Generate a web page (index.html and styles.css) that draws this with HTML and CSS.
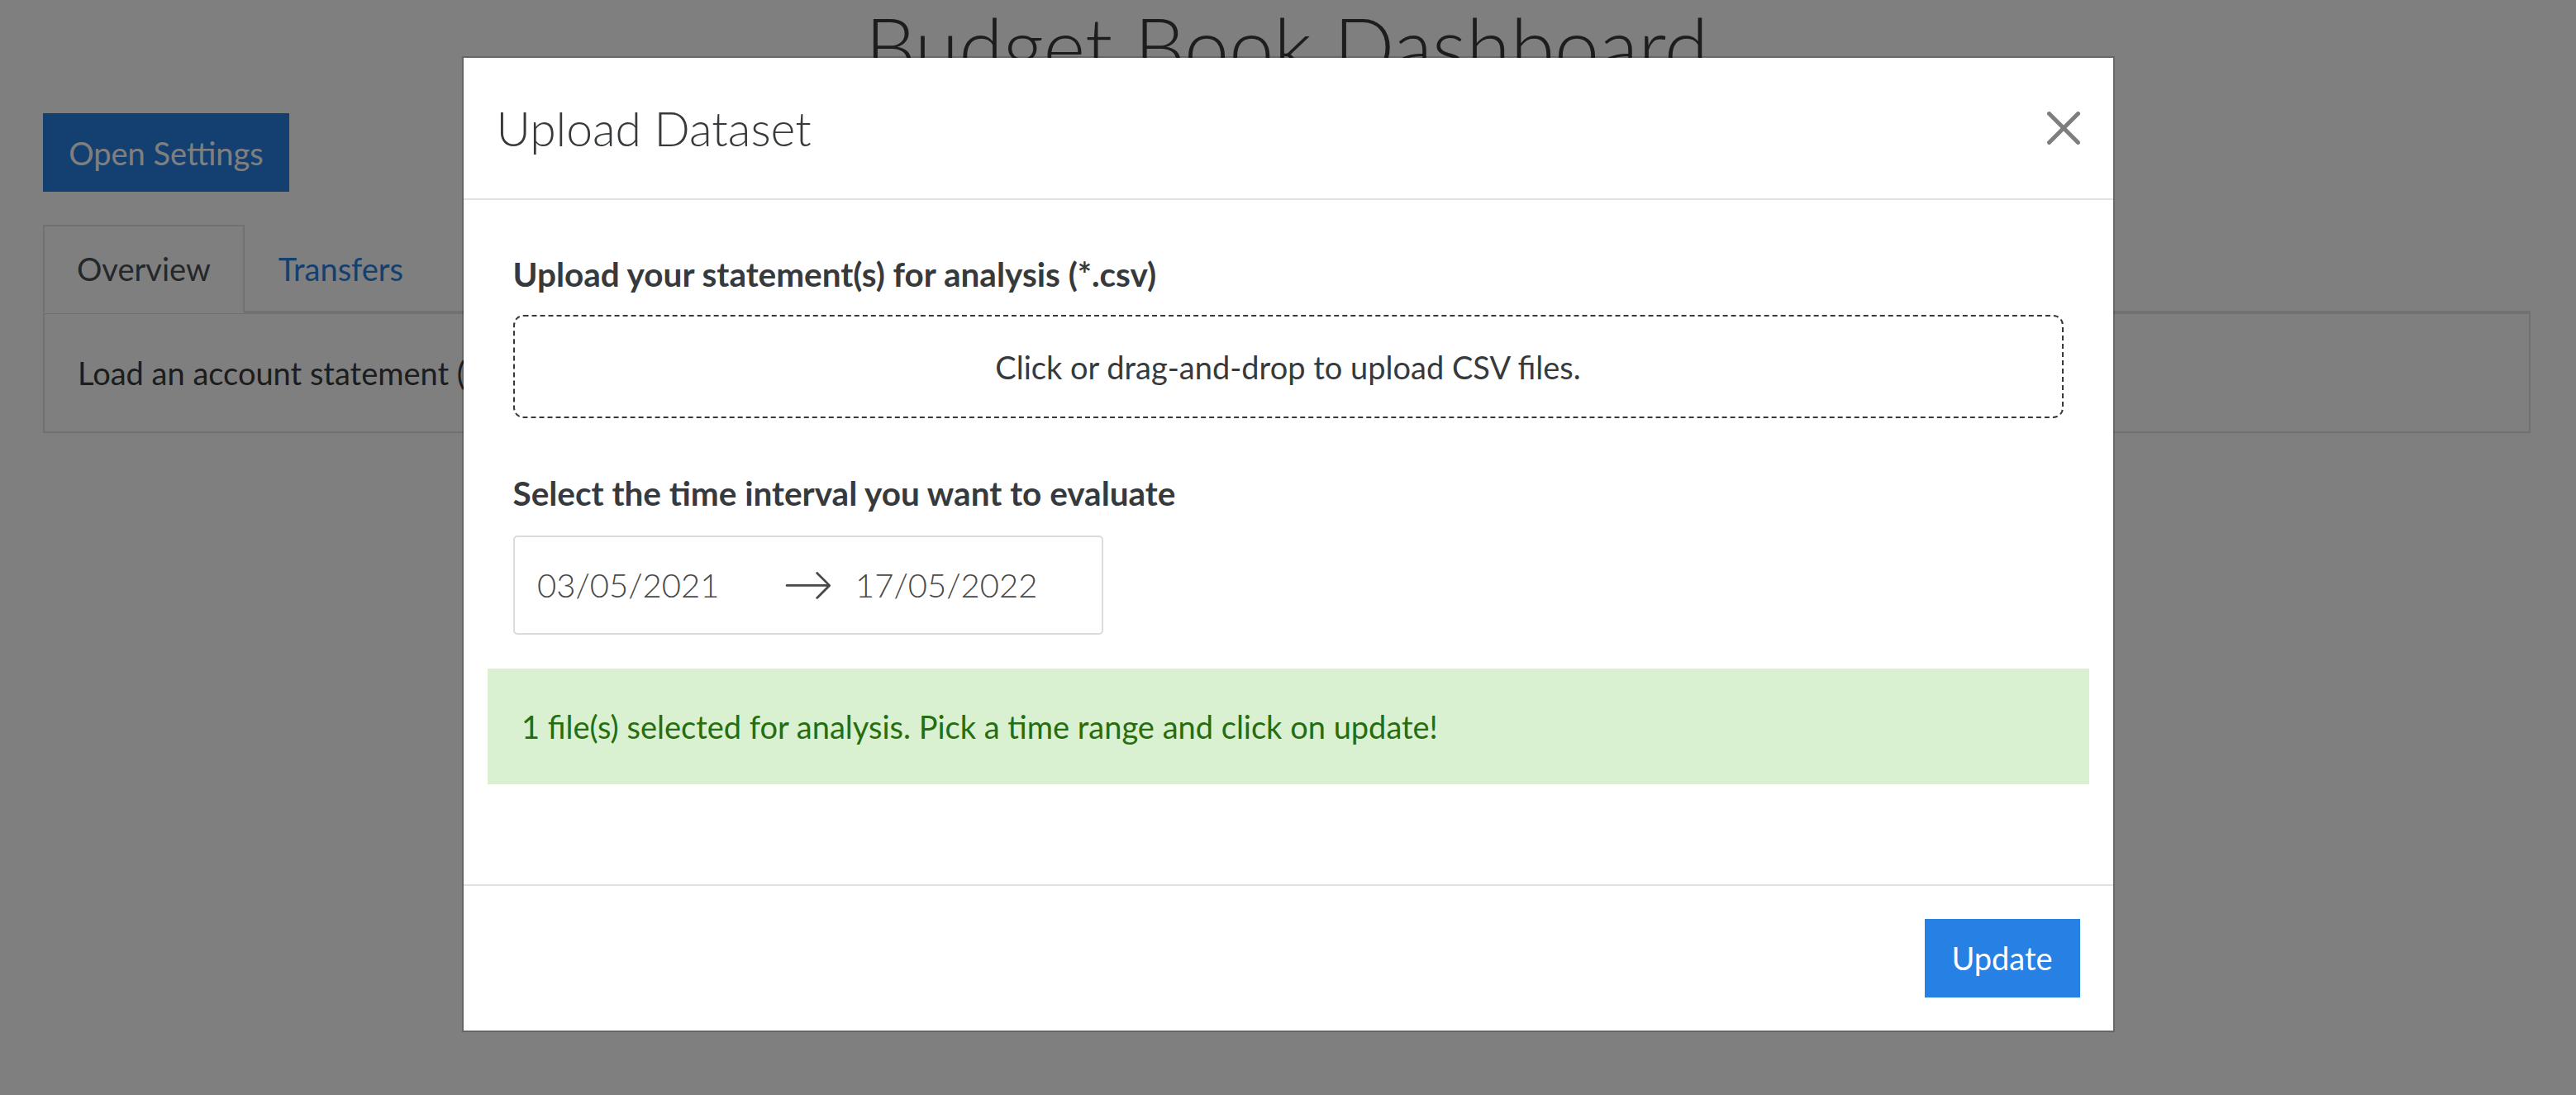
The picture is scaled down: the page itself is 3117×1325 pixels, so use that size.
FILE: index.html
```html
<!DOCTYPE html>
<html lang="en">
<head>
<meta charset="utf-8">
<title>Budget Book Dashboard</title>
<link rel="stylesheet" href="styles.css">
</head>
<body>
<div class="page">
  <h1 class="page-title">Budget Book Dashboard</h1>
  <button class="btn btn-primary settings-btn" type="button">Open Settings</button>
  <div class="tabs">
    <ul class="nav-tabs">
      <li class="tab active">Overview</li>
      <li class="tab">Transfers</li>
    </ul>
    <div class="tab-content">Load an account statement (CSV) in the settings to get started.</div>
  </div>
</div>

<div class="modal-layer">
  <div class="modal">
    <div class="modal-header">
      <h4 class="modal-title">Upload Dataset</h4>
      <button class="btn-close" type="button" aria-label="Close">
        <svg viewBox="0 0 16 16" width="40" height="40"><path d="M.293.293a1 1 0 0 1 1.414 0L8 6.586 14.293.293a1 1 0 1 1 1.414 1.414L9.414 8l6.293 6.293a1 1 0 0 1-1.414 1.414L8 9.414l-6.293 6.293a1 1 0 0 1-1.414-1.414L6.586 8 .293 1.707a1 1 0 0 1 0-1.414z"/></svg>
      </button>
    </div>
    <div class="modal-body">
      <div class="form-area">
        <label class="field-label">Upload your statement(s) for analysis (*.csv)</label>
        <div class="dropzone">Click or drag-and-drop to upload CSV files.</div>
        <label class="field-label second">Select the time interval you want to evaluate</label>
        <div class="daterange">
          <div class="date-input">03/05/2021</div>
          <svg class="date-arrow" viewBox="0 0 1000 1000" width="60" height="60"><path d="M694 242l249 250c12 11 12 21 1 32L694 773c-5 5-10 7-16 7s-11-2-16-7c-11-11-11-21 0-32l210-210H68c-13 0-23-10-23-23s10-23 23-23h806L662 275c-21-22 11-54 32-33z"/></svg>
          <div class="date-input">17/05/2022</div>
        </div>
      </div>
      <div class="alert-success">1 file(s) selected for analysis. Pick a time range and click on update!</div>
    </div>
    <div class="modal-footer">
      <button class="btn btn-primary update-btn" type="button">Update</button>
    </div>
  </div>
</div>
</body>
</html>
```

FILE: styles.css
```css
* {
  box-sizing: border-box;
}

html,
body {
  margin: 0;
  padding: 0;
}

body {
  width: 3117px;
  height: 1325px;
  overflow: hidden;
  background: #ffffff;
  color: #373a3c;
  font-family: Lato, "Noto Sans", sans-serif;
  font-size: 38px;
  line-height: 60px;
}

.page {
  padding: 0 55px 0 52px;
}

.page-title {
  margin: 0;
  text-align: center;
  font-size: 97px;
  font-weight: 300;
  line-height: 110px;
}

.btn {
  border: 0;
  border-radius: 0;
  font-family: inherit;
  font-size: 38px;
  font-weight: 400;
  line-height: 60px;
  cursor: pointer;
}

.btn-primary {
  background: #2780e3;
  color: #ffffff;
}

.settings-btn {
  display: block;
  margin-top: 27px;
  width: 298px;
  height: 95px;
  padding: 0;
}

.tabs {
  margin-top: 40px;
}

.nav-tabs {
  display: flex;
  margin: 0;
  padding: 0;
  list-style: none;
  border-bottom: 2.5px solid #dee2e6;
}

.tab {
  display: flex;
  align-items: center;
  height: 106.5px;
  margin-bottom: -2.5px;
  padding: 0 39px;
  border: 2.5px solid transparent;
  color: #2780e3;
}

.tab.active {
  color: #495057;
  background: #ffffff;
  border-color: #dee2e6 #dee2e6 #ffffff;
}

.tab-content {
  padding: 41px 40px;
  border: 2.5px solid #dee2e6;
}

/* modal */
.modal-layer {
  position: fixed;
  inset: 0;
  background: rgba(0, 0, 0, 0.5);
}

.modal {
  width: 2000px;
  margin: 68px auto 0;
  background: #ffffff;
  background-clip: padding-box;
  border: 2.5px solid rgba(0, 0, 0, 0.2);
}

.modal-header {
  display: flex;
  align-items: center;
  justify-content: space-between;
  padding: 40px;
  border-bottom: 2.5px solid #dee2e6;
}

.modal-title {
  margin: 0;
  font-size: 57px;
  font-weight: 300;
  line-height: 90px;
}

.btn-close {
  display: flex;
  width: 40px;
  height: 40px;
  padding: 0;
  border: 0;
  background: transparent;
  opacity: 0.5;
}

.btn-close svg {
  display: block;
  fill: #000000;
}

.modal-body {
  padding: 40px;
}

.form-area {
  padding: 20px 20px 0;
}

.field-label {
  display: block;
  margin-bottom: 19px;
  font-size: 40.5px;
  font-weight: 700;
  line-height: 60px;
}

.field-label.second {
  margin-top: 61px;
  margin-bottom: 21px;
}

.dropzone {
  display: flex;
  align-items: center;
  justify-content: center;
  height: 125px;
  border: 2.5px dashed #373a3c;
  border-radius: 12.5px;
}

.daterange {
  display: flex;
  align-items: center;
  width: max-content;
  height: 120px;
  border: 2.5px solid #dbdbdb;
  border-radius: 5px;
  background: #ffffff;
}

.date-input {
  width: 325px;
  padding: 0 27.5px;
  color: #484848;
  font-size: 40px;
  font-weight: 300;
}

.date-arrow {
  display: block;
  fill: #484848;
}

.alert-success {
  display: flex;
  align-items: center;
  height: 140px;
  margin: 40.5px -11px 81px -11px;
  padding: 0 41.5px;
  background: #d9f0d1;
  color: #266d0e;
}

.modal-footer {
  display: flex;
  justify-content: flex-end;
  padding: 40px;
  border-top: 2.5px solid #dee2e6;
}

.update-btn {
  width: 188px;
  height: 95px;
  padding: 0;
}
```
